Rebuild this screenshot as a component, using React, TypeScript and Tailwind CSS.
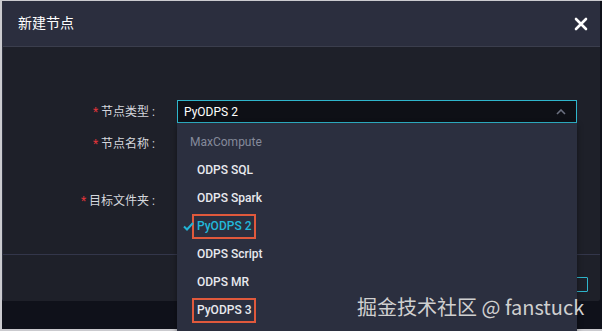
import React from "react";

const font = { fontFamily: "Roboto, 'Noto Sans CJK SC', sans-serif" };

const Label = ({ text }: { text: string }) => (
    <div className="w-[154px] shrink-0 text-right text-[12px] text-[#d5d7dd] pr-[2px]">
        <span className="text-[#e2343a] mr-[3px]">*</span>
        {text}
        <span className="ml-[3px]">:</span>
    </div>
);

const items = ["ODPS SQL", "ODPS Spark", "PyODPS 2", "ODPS Script", "ODPS MR", "PyODPS 3"];

const App = () => {
    return (
        <div className="w-[602px] h-[331px] bg-[#cbcbcf] pl-[2px] pt-[1px] pb-[2px] overflow-hidden" style={font}>
            <div className="relative w-full h-full bg-[#0f111a]">
                <div className="w-[598px] h-[300px] bg-[#1e2029] border-l border-[#2f3240] rounded-b-[2px] flex flex-col">
                    {/* header */}
                    <div className="h-[46px] bg-[#2b2e3e] border-b border-[#3b3e4d] flex items-center justify-between pl-[15px] pr-[12px]">
                        <span className="text-[14px] text-white">新建节点</span>
                        <svg width="14" height="14" viewBox="0 0 14 14">
                            <path d="M2 2 L12 12 M12 2 L2 12" stroke="#ffffff" strokeWidth="2.6" strokeLinecap="round" />
                        </svg>
                    </div>

                    {/* form */}
                    <div className="flex-1 flex flex-col">
                        <div className="flex items-center h-[23px] mt-[53px]">
                            <Label text="节点类型" />
                            <div className="ml-[20px] w-[400px] h-[23px] bg-[#0e1016] border border-[#2fb6cc] flex items-center justify-between pl-[6px] pr-[10px]">
                                <span className="text-[12px] text-white">PyODPS 2</span>
                                <svg width="10" height="6" viewBox="0 0 10 6">
                                    <path d="M1 5 L5 1 L9 5" stroke="#6b7080" strokeWidth="1.6" fill="none" />
                                </svg>
                            </div>
                        </div>
                        <div className="flex items-center h-[23px] mt-[9px]">
                            <Label text="节点名称" />
                        </div>
                        <div className="flex items-center h-[23px] mt-[34px]">
                            <Label text="目标文件夹" />
                        </div>
                    </div>

                    {/* footer */}
                    <div className="h-[47px] border-t border-[#33364a] flex justify-end pt-[22px] pr-[12px]">
                        <div className="w-[70px] h-[15px] border border-[#2fb6cc] rounded-[1px]"></div>
                    </div>
                </div>

                {/* dropdown menu */}
                <div className="absolute left-[175px] top-[122px] w-[400px] h-[220px] bg-[#2b2f3f] pt-[5px] shadow-[0_2px_6px_rgba(0,0,0,0.4)]">
                    <div className="h-[28px] flex items-center pl-[13px] text-[12px] text-[#858a9b]">MaxCompute</div>
                    {items.map((item, i) => {
                        const active = i === 2;
                        const boxed = i === 2 || i === 5;
                        return (
                            <div key={item} className="relative h-[28px] flex items-center pl-[20px] text-[12px] font-medium">
                                {active && (
                                    <svg className="absolute left-[6px] top-[10px]" width="11" height="9" viewBox="0 0 11 9">
                                        <path d="M1 4.5 L4 7.5 L10 1" stroke="#22b4d6" strokeWidth="2" fill="none" />
                                    </svg>
                                )}
                                {boxed ? (
                                    <span className={`-ml-[5px] px-[3px] h-[25px] leading-[21px] border-2 border-[#e0593c] ${active ? "text-[#22b8da]" : "text-[#e8e9ee]"}`}>
                                        {item}
                                    </span>
                                ) : (
                                    <span className="text-[#e8e9ee]">{item}</span>
                                )}
                            </div>
                        );
                    })}
                </div>

                {/* watermark */}
                <div className="absolute left-[355px] top-[292px] text-[20px] leading-[28px] text-[#d0d0d0] whitespace-nowrap" style={{ fontFamily: "'Noto Sans CJK SC', 'Noto Sans', sans-serif" }}>
                    掘金技术社区 @ fanstuck
                </div>
            </div>
        </div>
    );
};

export default App;
